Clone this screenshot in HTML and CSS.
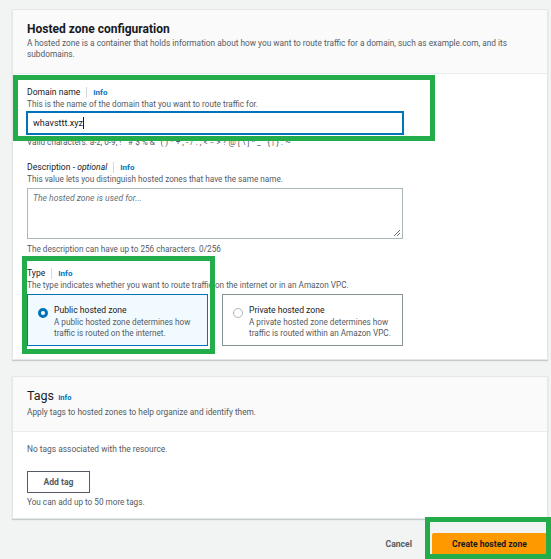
FILE: index.html
```html
<!DOCTYPE html>
<html lang="en">
<head>
<meta charset="utf-8">
<title>Create hosted zone</title>
<link rel="stylesheet" href="styles.css">
</head>
<body>
<div class="page">
  <section class="card">
    <header class="card-head">
      <h2 class="card-title">Hosted zone configuration</h2>
      <p class="card-desc">A hosted zone is a container that holds information about how you want to route traffic for a domain, such as example.com, and its subdomains.</p>
    </header>
    <div class="card-body">
      <div class="field">
        <div class="label-row"><span class="label">Domain name</span><span class="info">Info</span></div>
        <div class="help">This is the name of the domain that you want to route traffic for.</div>
        <div class="input focused"><span class="value">whavsttt.xyz</span><span class="caret"></span></div>
        <div class="help after valid">Valid characters: a-z, 0-9, ! " # $ % &amp; ' ( ) * + , - / : ; &lt; = &gt; ? @ [ \ ] ^ _ ` { | } . ~</div>
      </div>
      <div class="field desc-field">
        <div class="label-row"><span class="label">Description - <i>optional</i></span><span class="info">Info</span></div>
        <div class="help">This value lets you distinguish hosted zones that have the same name.</div>
        <div class="textarea"><span class="placeholder">The hosted zone is used for...</span>
          <svg class="grip" width="8" height="8" viewBox="0 0 8 8"><path d="M7 1 L1 7 M7 4 L4 7" stroke="#687078" stroke-width="1" fill="none"/></svg>
        </div>
        <div class="help after">The description can have up to 256 characters. 0/256</div>
      </div>
      <div class="field type-field">
        <div class="label-row"><span class="label">Type</span><span class="info">Info</span></div>
        <div class="help">The type indicates whether you want to route traffic on the internet or in an Amazon VPC.</div>
        <div class="tiles">
          <div class="tile selected">
            <span class="radio on"></span>
            <div class="tile-text">
              <div class="tile-title">Public hosted zone</div>
              <div class="tile-desc">A public hosted zone determines how traffic is routed on the internet.</div>
            </div>
          </div>
          <div class="tile">
            <span class="radio"></span>
            <div class="tile-text">
              <div class="tile-title">Private hosted zone</div>
              <div class="tile-desc">A private hosted zone determines how traffic is routed within an Amazon VPC.</div>
            </div>
          </div>
        </div>
      </div>
    </div>
  </section>

  <section class="card tags">
    <header class="card-head">
      <h2 class="card-title light">Tags <span class="info small">Info</span></h2>
      <p class="card-desc">Apply tags to hosted zones to help organize and identify them.</p>
    </header>
    <div class="card-body">
      <div class="empty">No tags associated with the resource.</div>
      <button class="btn">Add tag</button>
      <div class="help after">You can add up to 50 more tags.</div>
    </div>
  </section>

  <div class="actions">
    <button class="link-btn">Cancel</button>
    <button class="btn primary">Create hosted zone</button>
  </div>

  <div class="mark mark-domain"></div>
  <div class="mark mark-type"></div>
  <div class="mark mark-create"></div>
</div>
</body>
</html>
```

FILE: styles.css
```css
* { box-sizing: border-box; }
html, body { margin: 0; padding: 0; }
body {
  background: #f2f3f3;
  font-family: Roboto, "Liberation Sans", sans-serif;
  color: #16191f;
  width: 551px;
  height: 559px;
  overflow: hidden;
}
.page {
  position: relative;
  padding: 9px 3px 0 12px;
  height: 559px;
}
.card {
  background: #fff;
  border: 1px solid #e4e7e7;
  box-shadow: 0 1px 1px rgba(0,28,36,0.18);
}
.card-head {
  background: #fafafa;
  border-bottom: 1px solid #eaeded;
  padding: 11px 14px 14px;
}
.card-title {
  margin: 0;
  font-size: 12px;
  line-height: 16px;
  font-weight: 700;
  color: #16191f;
}
.card-title.light { font-weight: 400; font-size: 12.5px; }
.card-desc {
  margin: 1px 0 0;
  font-size: 8.3px;
  line-height: 10.5px;
  color: #545b64;
}
.card-body {
  padding: 12px 14px 13px;
}
.field + .field { margin-top: 11px; }
.field + .desc-field { margin-top: 13px; }
.field + .type-field { margin-top: 12px; }
.label-row {
  display: flex;
  align-items: center;
  height: 12px;
}
.label {
  font-size: 8.6px;
  color: #16191f;
}
.info {
  color: #0073bb;
  font-weight: 700;
  font-size: 8px;
  margin-left: 6px;
  padding-left: 6px;
  border-left: 1px solid #d5dbdb;
  line-height: 11px;
}
.info.small { border-left: 0; padding-left: 0; margin-left: 1px; font-size: 7.5px; }
.help {
  font-size: 8.2px;
  line-height: 11px;
  color: #545b64;
  margin-top: 1px;
}
.help.after { margin-top: 5px; }
.help.after.valid { margin-top: 3px; }
.input {
  margin-top: 2px;
  width: 376px;
  height: 22px;
  border: 1px solid #0073bb;
  box-shadow: 0 0 0 1px #0073bb;
  display: flex;
  align-items: center;
  padding-left: 5px;
  font-size: 9px;
  color: #16191f;
}
.caret {
  width: 1px;
  height: 12px;
  background: #16191f;
}
.textarea {
  position: relative;
  margin-top: 3px;
  width: 376px;
  height: 51px;
  border: 1px solid #aab7b8;
  padding: 4px 5px;
  font-size: 8.6px;
  color: #687078;
}
.placeholder { font-style: italic; }
.grip { position: absolute; right: 1px; bottom: 1px; }
.tiles {
  margin-top: 3px;
  display: flex;
  gap: 14px;
}
.tile {
  width: 181px;
  height: 52px;
  border: 1px solid #879596;
  display: flex;
  gap: 6px;
  padding: 9px 10px 0 10px;
}
.tile.selected {
  background: #f1faff;
  border-color: #0073bb;
}
.radio {
  flex: none;
  width: 10px;
  height: 10px;
  margin-top: 4px;
  border-radius: 50%;
  border: 1px solid #aab7b8;
  background: #fff;
}
.radio.on {
  border: 3px solid #0073bb;
}
.tile-title {
  font-size: 8.6px;
  line-height: 12px;
  color: #16191f;
}
.tile-desc {
  margin-top: 1px;
  font-size: 8.2px;
  line-height: 10.5px;
  color: #545b64;
}
.tags { margin-top: 16px; }
.tags .card-head { padding-top: 11px; padding-bottom: 13px; }
.tags .card-desc { margin-top: 3px; }
.tags .card-body { padding-top: 11px; padding-bottom: 10px; }
.empty {
  font-size: 8.4px;
  line-height: 12px;
  color: #545b64;
}
.btn {
  font-family: inherit;
  cursor: pointer;
}
.tags .btn {
  display: block;
  margin-top: 16px;
  width: 63px;
  height: 22px;
  border: 1px solid #545b64;
  background: #fff;
  color: #545b64;
  font-weight: 700;
  font-size: 8.6px;
  padding: 0;
}
.tags .help.after { margin-top: 4px; }
.actions {
  display: flex;
  justify-content: flex-end;
  align-items: center;
  gap: 20px;
  margin-top: 14px;
  padding-right: 1px;
}
.link-btn {
  border: 0;
  background: none;
  font-family: inherit;
  font-size: 8.6px;
  font-weight: 700;
  color: #545b64;
  padding: 0;
}
.btn.primary {
  width: 115px;
  height: 22px;
  border: 0;
  border-radius: 2px;
  background: #ff9900;
  color: #16191f;
  font-weight: 700;
  font-size: 8.6px;
  padding: 0;
}
.mark {
  position: absolute;
  border: 5px solid #22ad4a;
  pointer-events: none;
}
.mark-domain { left: 13px; top: 75px; width: 422px; height: 66px; }
.mark-type { left: 22px; top: 256px; width: 193px; height: 98px; }
.mark-create { left: 425px; top: 517px; width: 126px; height: 42px; }
```
